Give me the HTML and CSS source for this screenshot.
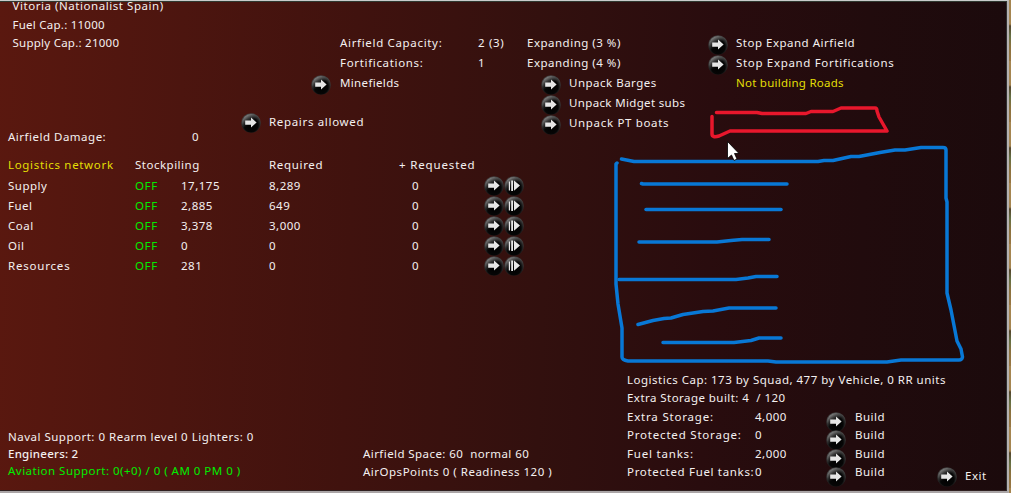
FILE: index.html
```
<!DOCTYPE html>
<html lang="en">
<head>
  <meta charset="UTF-8" />
  <meta name="viewport" content="width=device-width, initial-scale=1.0" />
  <title>Vitoria (Nationalist Spain)</title>
  <link rel="stylesheet" href="styles.css">
</head>
<body>
  <!-- shared button icons -->
  <svg class="defs" width="0" height="0">
    <defs>
      <radialGradient id="ball" cx="50%" cy="60%" r="55%">
        <stop offset="0" stop-color="#000" />
        <stop offset="0.65" stop-color="#060606" />
        <stop offset="1" stop-color="#444" />
      </radialGradient>
      <linearGradient id="shine" x1="0" y1="0" x2="0.55" y2="0.7">
        <stop offset="0" stop-color="#bbb" />
        <stop offset="0.8" stop-color="#555" stop-opacity="0" />
      </linearGradient>
    </defs>
    <symbol id="go" viewBox="0 0 20 20">
      <circle cx="10" cy="10" r="9.8" fill="url(#ball)" />
      <circle cx="10" cy="10" r="9" fill="url(#shine)" />
      <path d="M4.2 7.5H10V4.6L15.6 9.6L10 14.4V11.8H4.2Z" fill="#e6e6e6" />
    </symbol>
    <symbol id="step" viewBox="0 0 20 20">
      <circle cx="10" cy="10" r="9.8" fill="url(#ball)" />
      <circle cx="10" cy="10" r="9" fill="url(#shine)" />
      <path d="M4.8 5.5H6V14.5H4.8ZM7.2 4.5H9V15H7.2ZM10 4.5L16 9.6L10 14.8Z" fill="#e6e6e6" />
    </symbol>
  </svg>

  <div class="panel">
    <div class="top">
      <div class="base">
        <div class="base-info">
          <div>Vitoria (Nationalist Spain)</div>
          <div class="caps">Fuel Cap.: 11000</div>
          <div class="caps">Supply Cap.: 21000</div>
        </div>
        <div class="repairs"><svg class="btn"><use href="#go" /></svg><span class="wide">Repairs allowed</span></div>
        <div class="damage"><span>Airfield Damage:</span><span>0</span></div>
      </div>
      <div class="capacity">
        <div class="cap-row"><span class="wide">Airfield Capacity:</span><span class="wide">2 (3)</span></div>
        <div class="cap-row"><span class="wide">Fortifications:</span><span>1</span></div>
        <div class="line"><svg class="btn"><use href="#go" /></svg><span class="tight">Minefields</span></div>
      </div>
      <div class="expanding">
        <div class="line mid">Expanding (3 %)</div>
        <div class="line mid">Expanding (4 %)</div>
        <div class="line unpack"><svg class="btn"><use href="#go" /></svg><span>Unpack Barges</span></div>
        <div class="line unpack"><svg class="btn"><use href="#go" /></svg><span class="tight">Unpack Midget subs</span></div>
        <div class="line unpack"><svg class="btn"><use href="#go" /></svg><span class="wide">Unpack PT boats</span></div>
      </div>
      <div class="orders">
        <div class="line"><svg class="btn"><use href="#go" /></svg><span>Stop Expand Airfield</span></div>
        <div class="line"><svg class="btn"><use href="#go" /></svg><span class="wide">Stop Expand Fortifications</span></div>
        <div class="roads yellow">Not building Roads</div>
      </div>
    </div>

    <div class="network">
      <div class="net-row net-head"><span class="yellow wide">Logistics network</span><span>Stockpiling</span><span class="wide">Required</span><span class="requested">+ Requested</span></div>
      <div class="net-row"><span>Supply</span><span class="green off">OFF</span><span>17,175</span><span>8,289</span><span>0</span><svg class="btn"><use href="#go" /></svg><svg class="btn"><use href="#step" /></svg></div>
      <div class="net-row"><span>Fuel</span><span class="green off">OFF</span><span>2,885</span><span>649</span><span>0</span><svg class="btn"><use href="#go" /></svg><svg class="btn"><use href="#step" /></svg></div>
      <div class="net-row"><span>Coal</span><span class="green off">OFF</span><span>3,378</span><span>3,000</span><span>0</span><svg class="btn"><use href="#go" /></svg><svg class="btn"><use href="#step" /></svg></div>
      <div class="net-row"><span>Oil</span><span class="green off">OFF</span><span>0</span><span>0</span><span>0</span><svg class="btn"><use href="#go" /></svg><svg class="btn"><use href="#step" /></svg></div>
      <div class="net-row"><span class="wider">Resources</span><span class="green off">OFF</span><span>281</span><span>0</span><span>0</span><svg class="btn"><use href="#go" /></svg><svg class="btn"><use href="#step" /></svg></div>
    </div>

    <div class="bottom">
      <div class="support">
        <div class="naval">Naval Support: 0 Rearm level 0 Lighters: 0</div>
        <div class="engineers">Engineers: 2</div>
        <div class="aviation green">Aviation Support: 0(+0) / 0 ( AM 0 PM 0 )</div>
      </div>
      <div class="airfield">
        <div class="space">Airfield Space: 60&nbsp; normal 60</div>
        <div class="ops">AirOpsPoints 0 ( Readiness 120 )</div>
      </div>
      <div class="storage">
        <div class="logcap">Logistics Cap: 173 by Squad, 477 by Vehicle, 0 RR units</div>
        <div class="built">Extra Storage built: 4&nbsp; / 120</div>
        <div class="store-row"><span class="wider">Extra Storage:</span><span>4,000</span><svg class="btn"><use href="#go" /></svg><span>Build</span></div>
        <div class="store-row"><span class="wider">Protected Storage:</span><span>0</span><svg class="btn"><use href="#go" /></svg><span>Build</span></div>
        <div class="store-row"><span class="wider">Fuel tanks:</span><span>2,000</span><svg class="btn"><use href="#go" /></svg><span>Build</span></div>
        <div class="store-row"><span class="wide">Protected Fuel tanks:</span><span>0</span><svg class="btn"><use href="#go" /></svg><span>Build</span></div>
      </div>
      <div class="exit"><svg class="btn"><use href="#go" /></svg><span>Exit</span></div>
    </div>

    <!-- pen marks and mouse pointer on top of the panel -->
    <svg class="marks" viewBox="0 0 1011 493">
      <g class="pen red">
        <path d="M716.5 112.5H757L762 113.5H806L811 111.5H833L841 108H875Q877 108 877 111L879 117L887 131H730L719 136Q712 138 712 134V116.5" />
      </g>
      <g class="pen blue">
        <path d="M621.5 159L634 161.5H818L824 160.5H833L851 156.5H859L880 152.5L895 150H905L921 147.5H943Q946 147.5 946 150V198L947 202V293L951 310L957 341L961 349L962.5 357Q962 360 959 360H901L894 361L887 362H776L768 361H628Q622 360 622 357V328L618 304L616 284V164L617 163" />
        <path d="M641.5 183.5L643 184H787" />
        <path d="M646 209.5H781" />
        <path d="M639 242H717L731 240.5L742 239.5H769" />
        <path d="M619 279.5H736L748 278L756 276.5H777" />
        <path d="M638 324.5L653 320.5L664 318.5L671 318L683 314.5L703 311.5L713 311L729 308H776" />
        <path d="M663 342.5H734L751 340.5L759 338H781" />
      </g>
      <path class="pointer" d="M727.5 141.5V158.5L731.5 155L734 160.5L737 159L734.5 153.5H739Z" />
    </svg>
  </div>
  <div class="map"></div>
</body>
</html>
```
FILE: styles.css
```
body {
  margin: 0;
  width: 1011px;
  height: 493px;
  display: flex;
  overflow: hidden;
  background: #1c0b0d;
  color: #f4f0f0;
  font-family: "Noto Sans", sans-serif;
  font-size: 11.5px;
  letter-spacing: 0.5px;
  white-space: nowrap;
}
.defs { position: absolute; }
.panel {
  position: relative;
  box-sizing: border-box;
  width: 1009px;
  height: 493px;
  border-top: 1px solid #c9cccb;
  border-right: 2px solid #b5b1b1;
  border-bottom: 2px solid #aaa5a6;
  background: linear-gradient(92deg, #5a180f 0%, #4c150f 18%, #40120e 35%, #32100e 54%, #290c0e 70%, #210b0d 85%, #1b0a0c 100%);
  box-shadow: inset 0 1px 0 #303830, inset -1px 0 0 #303030, inset 0 -1px 0 #302020;
}
.map {
  width: 2px;
  background: repeating-linear-gradient(#a58550 0 24px, #54452c 26px, #657044 36px, #8a713e 46px, #997743 61px);
}
.btn {
  display: block;
  width: 20px;
  height: 20px;
  flex: none;
}
.yellow { color: #e3df05; }
.green { color: #00ed00; }
.off { letter-spacing: 0.6px; }
.tight { letter-spacing: 0.35px; }
.wide { letter-spacing: 0.67px; }
.wider { letter-spacing: 0.8px; }

/* top part */
.top {
  display: flex;
  height: 154px;
}
.base { width: 311px; }
.base-info {
  height: 113px;
  margin-top: -4px;
  padding-left: 12.5px;
  line-height: 18.5px;
  letter-spacing: 0.55px;
}
.base-info .caps { letter-spacing: 0.25px; }
.repairs {
  display: flex;
  height: 15px;
  padding-left: 241px;
  gap: 8px;
}
.repairs span { line-height: 24px; }
.repairs .btn { margin-top: 3px; }
.damage {
  display: flex;
  padding-left: 8px;
  line-height: 24px;
}
.damage span:first-child { width: 184px; }
.capacity, .expanding, .orders {
  padding-top: 32px;
  line-height: 20px;
}
.capacity { width: 216px; }
.cap-row {
  display: flex;
  padding-left: 29px;
}
.cap-row span:first-child { width: 138px; }
.line {
  display: flex;
  height: 20px;
  gap: 8px;
}
.line .btn { margin-top: 2px; }
.capacity .line { gap: 9px; }
.expanding { width: 181px; }
.unpack { padding-left: 14px; }
.roads {
  padding-left: 28px;
  letter-spacing: 0.25px;
}

/* logistics table */
.network {
  height: 216px;
}
.net-row {
  display: grid;
  grid-template-columns: 127px 46px 88px 143px 72px 20px 20px;
  height: 20px;
  padding-left: 8px;
  line-height: 20px;
}
.net-head {
  grid-template-columns: 127px 134px 130px 100px;
  height: 21px;
}
.requested { letter-spacing: 0.85px; }

/* bottom part */
.bottom {
  display: flex;
  height: 120px;
}
.support {
  width: 355px;
  padding: 57px 0 0 8px;
  line-height: 17px;
}
.engineers {
  font-weight: 500;
  letter-spacing: 0.25px;
}
.aviation { letter-spacing: 0.48px; }
.airfield {
  width: 264px;
  padding-top: 74px;
  line-height: 18px;
}
.space { letter-spacing: 0.43px; }
.storage {
  width: 310px;
  line-height: 18.4px;
}
.built { letter-spacing: 0.45px; }
.store-row {
  display: grid;
  grid-template-columns: 128px 71px 29px 60px;
  height: 18.4px;
}
.store-row .btn { margin-top: 4px; }
.exit {
  display: flex;
  gap: 8px;
  padding-top: 96px;
  line-height: 18px;
}

/* drawings */
.marks {
  position: absolute;
  top: -1px;
  left: 0;
  width: 1011px;
  height: 493px;
}
.pen {
  fill: none;
  stroke-width: 3.5;
  stroke-linecap: round;
  stroke-linejoin: round;
}
.red { stroke: #e8172c; }
.blue { stroke: #0878d6; }
.pointer {
  fill: #fff;
  stroke: #000;
  stroke-width: 0.8;
}
```
